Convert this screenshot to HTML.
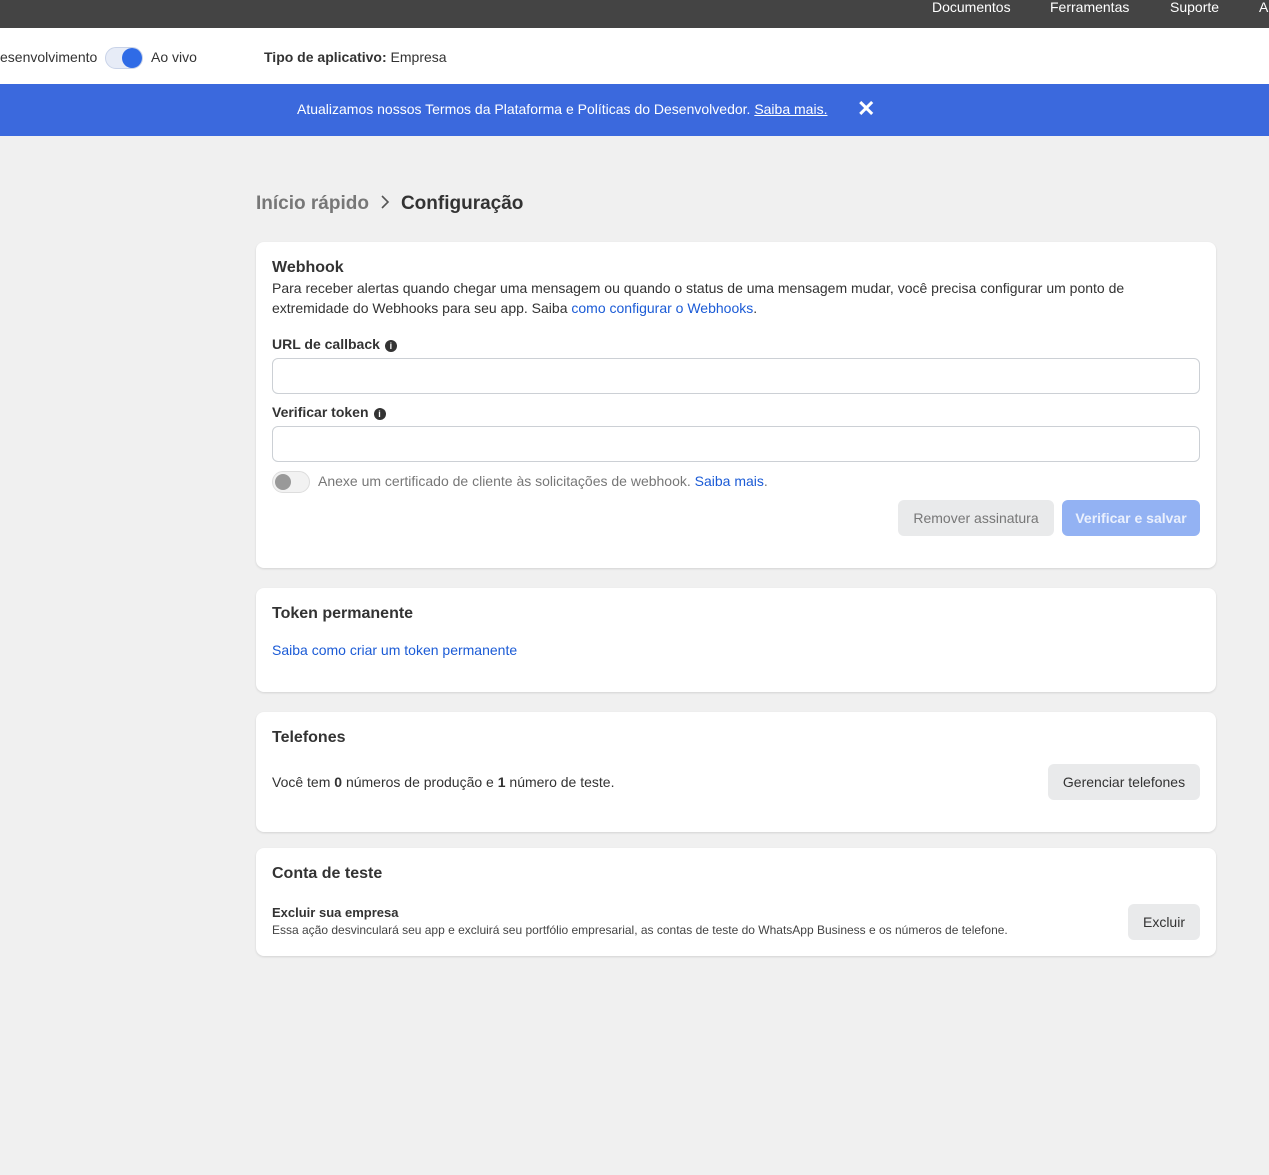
<!DOCTYPE html>
<html><head><meta charset="utf-8"><style>
*{box-sizing:border-box;margin:0;padding:0}
body{width:1269px;height:1175px;background:#f0f0f0;font-family:"Liberation Sans",Arial,sans-serif;color:#1c1e21;position:relative;overflow:hidden;font-size:14px}
.abs{position:absolute;white-space:nowrap}
.top{position:absolute;left:0;top:0;width:1269px;height:28px;background:#444}
.top span{position:absolute;top:-1px;color:#fff;font-size:14px}
.bar2{position:absolute;top:28px;left:0;width:1269px;height:56px;background:#fff}
.banner{position:absolute;top:84px;left:0;width:1269px;height:52px;background:#3b69dd;color:#fff}
.card{position:absolute;left:256px;width:960px;background:#fff;border-radius:8px;box-shadow:0 1px 2px rgba(0,0,0,.12)}
.h{font-weight:bold;font-size:16px;color:#333}
a{color:#1b5bd6;text-decoration:none}
.input{position:absolute;left:16px;width:928px;height:36px;border:1px solid #ccd0d5;border-radius:6px}
.lbl{font-weight:bold;color:#333;font-size:14px}
.info{display:inline-block;width:12px;height:12px;border-radius:50%;background:#333;color:#fff;font-size:9px;text-align:center;line-height:12px;font-weight:bold;vertical-align:0;margin-left:5px}
.btn{position:absolute;height:36px;border-radius:6px;background:#e9eaeb;color:#333;text-align:center;line-height:36px;font-size:14px}
</style></head><body>
<div class="top"><span style="left:932px">Documentos</span><span style="left:1050px">Ferramentas</span><span style="left:1170px">Suporte</span><span style="left:1259px">A</span></div>
<div class="bar2">
<span class="abs" style="left:0;top:21px;color:#333">esenvolvimento</span>
<div class="abs" style="left:105px;top:19px;width:38px;height:22px;border-radius:11px;background:#e7ecf7;border:1px solid #c9d3e8"></div>
<div class="abs" style="left:122px;top:20px;width:20px;height:20px;border-radius:50%;background:#2f6be6"></div>
<span class="abs" style="left:151px;top:21px;color:#333">Ao vivo</span>
<span class="abs" style="left:264px;top:21px;color:#333"><b>Tipo de aplicativo:</b> Empresa</span>
</div>
<div class="banner"><span class="abs" style="left:297px;top:17px">Atualizamos nossos Termos da Plataforma e Políticas do Desenvolvedor. <u>Saiba mais.</u></span>
<span class="abs" style="left:857px;top:12px;font-size:22px;font-weight:bold">✕</span></div>
<div class="abs" style="left:256px;top:193px;font-size:19px;font-weight:bold;color:#777">Início rápido<svg width="32" height="16" viewBox="0 0 32 16" style="vertical-align:-1px"><path d="M13 2l6 6-6 6" fill="none" stroke="#555" stroke-width="1.6"/></svg><span style="color:#333">Configuração</span></div>

<div class="card" style="top:242px;height:326px">
<div class="abs h" style="left:16px;top:17px">Webhook</div>
<div class="abs" style="left:16px;top:36px;line-height:20px;color:#333">Para receber alertas quando chegar uma mensagem ou quando o status de uma mensagem mudar, você precisa configurar um ponto de<br>extremidade do Webhooks para seu app. Saiba <a>como configurar o Webhooks</a>.</div>
<div class="abs lbl" style="left:16px;top:94px">URL de callback<span class="info">i</span></div>
<div class="input" style="top:116px"></div>
<div class="abs lbl" style="left:16px;top:162px">Verificar token<span class="info">i</span></div>
<div class="input" style="top:184px"></div>
<div class="abs" style="left:16px;top:229px;width:38px;height:22px;border-radius:11px;background:#f2f2f2;border:1px solid #ddd"></div>
<div class="abs" style="left:19px;top:232px;width:16px;height:16px;border-radius:50%;background:#999"></div>
<span class="abs" style="left:62px;top:231px;color:#777">Anexe um certificado de cliente às solicitações de webhook. <a>Saiba mais</a>.</span>
<div class="btn" style="left:642px;top:258px;width:156px;color:#777">Remover assinatura</div>
<div class="btn" style="left:806px;top:258px;width:138px;background:#93b2f3;color:#eaf0fd;font-weight:bold">Verificar e salvar</div>
</div>

<div class="card" style="top:588px;height:104px">
<div class="abs h" style="left:16px;top:17px">Token permanente</div>
<a class="abs" style="left:16px;top:54px">Saiba como criar um token permanente</a>
</div>

<div class="card" style="top:712px;height:120px">
<div class="abs h" style="left:16px;top:17px">Telefones</div>
<span class="abs" style="left:16px;top:62px;color:#333">Você tem <b>0</b> números de produção e <b>1</b> número de teste.</span>
<div class="btn" style="left:792px;top:52px;width:152px">Gerenciar telefones</div>
</div>

<div class="card" style="top:848px;height:108px">
<div class="abs h" style="left:16px;top:17px">Conta de teste</div>
<div class="abs" style="left:16px;top:57px;font-weight:bold;font-size:13px;color:#333">Excluir sua empresa</div>
<div class="abs" style="left:16px;top:75px;font-size:12px;color:#444">Essa ação desvinculará seu app e excluirá seu portfólio empresarial, as contas de teste do WhatsApp Business e os números de telefone.</div>
<div class="btn" style="left:872px;top:56px;width:72px">Excluir</div>
</div>
</body></html>
